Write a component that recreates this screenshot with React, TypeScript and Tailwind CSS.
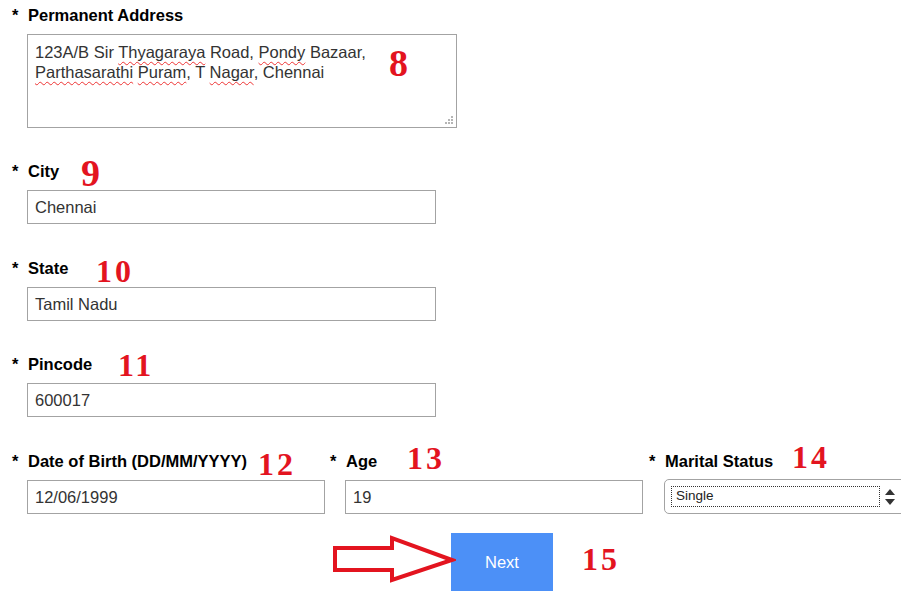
const font = { fontFamily: '"Liberation Sans", Arial, sans-serif' };

function Label({ text }: { text: string }) {
  return (
    <div className="flex h-5 items-center text-[16.5px] font-bold leading-5 text-black">
      <span className="w-4">*</span>
      <span>{text}</span>
    </div>
  );
}

function Field({ label, value, width = "w-[409px]" }: { label: string; value: string; width?: string }) {
  return (
    <div>
      <Label text={label} />
      <div
        className={`ml-[15px] mt-[9px] flex h-[34px] items-center border border-[#a3a3a3] bg-white px-[7px] text-[16.5px] text-[#333] ${width}`}
      >
        {value}
      </div>
    </div>
  );
}

function Num({ n, className }: { n: string; className: string }) {
  return (
    <span
      className={`absolute font-bold leading-none tracking-[3px] text-[#e3141f] ${className}`}
      style={{ fontFamily: '"Liberation Serif", "Times New Roman", serif' }}
    >
      {n}
    </span>
  );
}

const squiggle =
  "underline decoration-wavy decoration-[#e33] decoration-1 underline-offset-[3px] [text-decoration-skip-ink:none]";

export default function App() {
  return (
    <div className="relative h-[593px] w-[901px] overflow-hidden bg-white pl-3 pt-[5px]" style={font}>
      {/* address */}
      <div>
        <Label text="Permanent Address" />
        <div className="relative ml-[15px] mt-[9px] h-[94px] w-[430px] border border-[#a3a3a3] px-[7px] pt-[7px] text-[16.5px] leading-5 text-[#333]">
          <div>
            123A/B Sir <span className={squiggle}>Thyagaraya</span> Road, <span className={squiggle}>Pondy</span> Bazaar,
          </div>
          <div>
            <span className={squiggle}>Parthasarathi</span> <span className={squiggle}>Puram</span>, T{" "}
            <span className={squiggle}>Nagar</span>, Chennai
          </div>
          <svg className="absolute bottom-[2px] right-[2px]" width="10" height="10" viewBox="0 0 10 10">
            <g fill="#b5b5b5">
              <rect x="7" y="1" width="2" height="2" />
              <rect x="4" y="4" width="2" height="2" />
              <rect x="7" y="4" width="2" height="2" />
              <rect x="1" y="7" width="2" height="2" />
              <rect x="4" y="7" width="2" height="2" />
              <rect x="7" y="7" width="2" height="2" />
            </g>
          </svg>
        </div>
      </div>

      <div className="mt-[33px]">
        <Field label="City" value="Chennai" />
      </div>
      <div className="mt-[34px]">
        <Field label="State" value="Tamil Nadu" />
      </div>
      <div className="mt-[33px]">
        <Field label="Pincode" value="600017" />
      </div>

      <div className="mt-[34px] flex">
        <div className="w-[318px] shrink-0">
          <Field label="Date of Birth (DD/MM/YYYY)" value="12/06/1999" width="w-[298px]" />
        </div>
        <div className="w-[319px] shrink-0">
          <Field label="Age" value="19" width="w-[298px]" />
        </div>
        <div className="shrink-0">
          <Label text="Marital Status" />
          <div className="ml-[15px] mt-[8px] flex h-[35px] w-[250px] items-center rounded-[5px] border border-[#a3a3a3] bg-white pl-[6px]">
            <div className="flex h-[21px] w-[209px] items-center border border-dotted border-[#333] pl-[4px] text-[13.5px] text-[#222]">
              Single
            </div>
            <svg className="ml-[4px]" width="12" height="20" viewBox="0 0 12 20">
              <path d="M6 2 L11 8 L1 8 Z" fill="#333" />
              <path d="M1 12 L11 12 L6 18 Z" fill="#333" />
            </svg>
          </div>
        </div>
      </div>

      <div className="mt-[19px] flex">
        <button className="ml-[439px] h-[58px] w-[102px] bg-[#4c90f7] pt-[1px] text-[16.5px] text-white">Next</button>
      </div>

      {/* annotations */}
      <svg className="absolute left-[332px] top-[535px]" width="124" height="48" viewBox="0 0 124 48">
        <polygon
          points="3,13 60,13 60,3 120,25 60,45 60,35 3,35"
          fill="white"
          stroke="#e3141f"
          strokeWidth="4"
          strokeLinejoin="miter"
        />
      </svg>
      <Num n="8" className="left-[389px] top-[44px] text-[38px]" />
      <Num n="9" className="left-[81px] top-[154px] text-[38px]" />
      <Num n="10" className="left-[96px] top-[255px] text-[32px]" />
      <Num n="11" className="left-[118px] top-[349px] text-[32px]" />
      <Num n="12" className="left-[258px] top-[448px] text-[32px]" />
      <Num n="13" className="left-[407px] top-[442px] text-[32px]" />
      <Num n="14" className="left-[792px] top-[441px] text-[32px]" />
      <Num n="15" className="left-[582px] top-[543px] text-[32px]" />
    </div>
  );
}
